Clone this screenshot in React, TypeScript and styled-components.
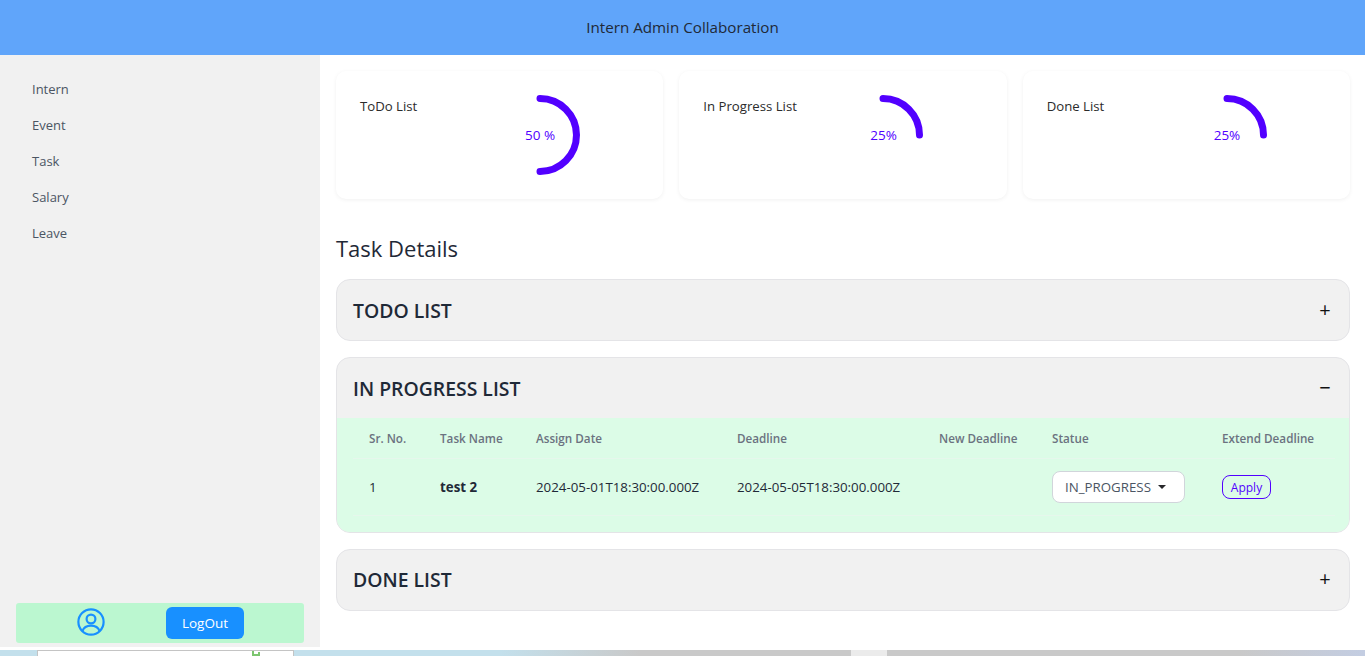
import React from "react";
import styled, { createGlobalStyle } from "styled-components";

const FONT = '"Open Sans", "Noto Sans", sans-serif';

const GlobalStyle = createGlobalStyle`
  html, body {
    margin: 0;
    padding: 0;
    background: #fff;
    font-family: ${FONT};
    color: #212529;
    overflow: hidden;
  }
  * { box-sizing: border-box; }
`;

const Page = styled.div`
  width: 1365px;
  height: 656px;
  display: flex;
  flex-direction: column;
`;

const Header = styled.header`
  height: 55px;
  flex: none;
  background: #60a5fa;
  display: flex;
  align-items: center;
  justify-content: center;
  padding-bottom: 2px;
  font-size: 15.2px;
  color: #1f2937;
`;

const Body = styled.div`
  height: 592px;
  flex: none;
  display: flex;
`;

const Sidebar = styled.aside`
  width: 320px;
  flex: none;
  background: #f1f1f1;
  display: flex;
  flex-direction: column;
  justify-content: space-between;
  padding: 16px 16px 4px;
`;

const Nav = styled.nav`
  display: flex;
  flex-direction: column;
`;

const NavItem = styled.a`
  height: 36px;
  padding-left: 16px;
  display: flex;
  align-items: center;
  font-size: 13px;
  color: #4b5563;
`;

const UserBar = styled.div`
  height: 40px;
  background: #bbf7d0;
  border-radius: 3px;
  display: grid;
  grid-template-columns: 150px 1fr;
  align-items: center;
`;

const UserIcon = styled.svg`
  width: 28px;
  height: 28px;
  justify-self: center;
  margin-bottom: 2px;
`;

const LogoutButton = styled.button`
  width: 78px;
  height: 32px;
  border: 0;
  border-radius: 6px;
  background: #1890ff;
  color: #fff;
  font-family: ${FONT};
  font-size: 13.5px;
  font-weight: 500;
`;

const Main = styled.main`
  flex: 1;
  padding: 16px 15px 0 16px;
  min-width: 0;
`;

const Stats = styled.section`
  display: grid;
  grid-template-columns: repeat(3, 1fr);
  gap: 16px;
`;

const StatCard = styled.div`
  height: 128px;
  border-radius: 10px;
  background: #fff;
  box-shadow: 0 1px 4px rgba(0, 0, 0, 0.06);
  padding: 26px 24px;
  position: relative;
`;

const StatTitle = styled.div`
  font-size: 13.2px;
  color: #2b2b2b;
  line-height: 18px;
`;

const Gauge = styled.div`
  position: absolute;
  top: 24px;
  left: 164px;
  width: 80px;
  height: 80px;
`;

const GaugeLabel = styled.span<{ $x: number }>`
  position: absolute;
  top: 31px;
  left: ${(p) => p.$x}px;
  font-size: 13.5px;
  line-height: 18px;
  color: #5200ff;
  white-space: nowrap;
`;

const SectionTitle = styled.h2`
  margin: 32px 0 14px;
  font-size: 22px;
  font-weight: 400;
  line-height: 34px;
  color: #1f2937;
`;

const AccordionList = styled.div`
  display: flex;
  flex-direction: column;
  gap: 16px;
`;

const AccordionItem = styled.div`
  border: 1px solid #e4e4e7;
  border-radius: 14px;
  overflow: hidden;
  background: #f1f1f1;
`;

const AccordionHead = styled.div`
  height: 60px;
  padding: 0 16px;
  display: flex;
  align-items: center;
  justify-content: space-between;
  font-size: 19.4px;
  font-weight: 600;
  color: #1f2937;
`;

const AccordionSign = styled.span`
  font-size: 20px;
  font-weight: 400;
  width: 16px;
  text-align: center;
  color: #111;
  margin-bottom: 2px;
`;

const AccordionBody = styled.div`
  background: #dcfce7;
  padding: 0 16px 16px;
`;

const Table = styled.table`
  width: 100%;
  border-collapse: collapse;
  table-layout: fixed;
  font-size: 13.3px;
`;

const HeadCell = styled.th<{ $w: number }>`
  width: ${(p) => p.$w}px;
  height: 40px;
  padding: 0 16px;
  text-align: left;
  font-size: 11.7px;
  font-weight: 600;
  color: #6b7280;
  border-bottom: 1px solid #e6f7ec;
  white-space: nowrap;
`;

const Cell = styled.td<{ $bold?: boolean }>`
  height: 57px;
  padding: 0 16px;
  font-weight: ${(p) => (p.$bold ? 700 : 400)};
  border-bottom: 1px solid #e6f7ec;
  white-space: nowrap;
  color: #1f2937;
`;

const StatusSelect = styled.div`
  width: 133px;
  height: 32px;
  border: 1px solid #d1d5db;
  border-radius: 8px;
  background: #fff;
  display: flex;
  align-items: center;
  gap: 7px;
  padding: 1px 0 0 12px;
  color: #4b5563;
`;

const Caret = styled.span`
  width: 0;
  height: 0;
  border-left: 4px solid transparent;
  border-right: 4px solid transparent;
  border-top: 4px solid #27272a;
`;

const ApplyButton = styled.button`
  width: 49px;
  height: 24px;
  padding: 1px 0 0;
  border: 1px solid #5200ff;
  border-radius: 8px;
  background: transparent;
  color: #5200ff;
  font-family: ${FONT};
  font-size: 12px;
`;

const Taskbar = styled.div`
  height: 6px;
  margin-top: 3px;
  flex: none;
  display: flex;
  background: linear-gradient(90deg, #c3e0ec 0 500px, #c9c9c9 640px 1240px, #c3cde2 1365px);
`;

const TaskbarWindow = styled.div`
  width: 257px;
  margin-left: 37px;
  background: #fff;
  border: 1px solid #c4c4c4;
  border-bottom: 0;
  position: relative;
`;

const TaskbarGlyph = styled.svg`
  position: absolute;
  left: 214px;
  top: 0;
  width: 8px;
  height: 5px;
`;

const TaskbarGap = styled.div`
  width: 36px;
  margin-left: 557px;
  background: #ebebeb;
`;

function Arc({ d }: { d: string }) {
  return (
    <svg width="80" height="80" viewBox="0 0 80 80">
      <path d={d} fill="none" stroke="#5200ff" strokeWidth="7" strokeLinecap="round" />
    </svg>
  );
}

const HALF = "M40 3.5 A36.5 36.5 0 0 1 40 76.5";
const QUARTER = "M40 3.5 A36.5 36.5 0 0 1 76.5 40";

const stats = [
  { title: "ToDo List", label: "50 %", arc: HALF, labelX: 25 },
  { title: "In Progress List", label: "25%", arc: QUARTER, labelX: 27 },
  { title: "Done List", label: "25%", arc: QUARTER, labelX: 27 },
];

const columns = [
  ["Sr. No.", 71],
  ["Task Name", 96],
  ["Assign Date", 201],
  ["Deadline", 202],
  ["New Deadline", 113],
  ["Statue", 170],
  ["Extend Deadline", 129],
] as const;

export default function App() {
  return (
    <Page>
      <GlobalStyle />
      <Header>Intern Admin Collaboration</Header>
      <Body>
        <Sidebar>
          <Nav>
            {["Intern", "Event", "Task", "Salary", "Leave"].map((item) => (
              <NavItem key={item}>{item}</NavItem>
            ))}
          </Nav>
          <UserBar>
            <UserIcon viewBox="0 0 28 28" fill="none" stroke="#1890ff" strokeWidth="2.2">
              <circle cx="14" cy="14" r="12.6" />
              <circle cx="14" cy="11" r="4.4" />
              <path d="M5.5 23 C7 18.5 10.5 17.6 14 17.6 C17.5 17.6 21 18.5 22.5 23" />
            </UserIcon>
            <LogoutButton>LogOut</LogoutButton>
          </UserBar>
        </Sidebar>
        <Main>
          <Stats>
            {stats.map((s) => (
              <StatCard key={s.title}>
                <StatTitle>{s.title}</StatTitle>
                <Gauge>
                  <Arc d={s.arc} />
                  <GaugeLabel $x={s.labelX}>{s.label}</GaugeLabel>
                </Gauge>
              </StatCard>
            ))}
          </Stats>
          <SectionTitle>Task Details</SectionTitle>
          <AccordionList>
            <AccordionItem>
              <AccordionHead>
                TODO LIST
                <AccordionSign>+</AccordionSign>
              </AccordionHead>
            </AccordionItem>
            <AccordionItem>
              <AccordionHead>
                IN PROGRESS LIST
                <AccordionSign>−</AccordionSign>
              </AccordionHead>
              <AccordionBody>
                <Table>
                  <thead>
                    <tr>
                      {columns.map(([name, w]) => (
                        <HeadCell key={name} $w={w}>{name}</HeadCell>
                      ))}
                    </tr>
                  </thead>
                  <tbody>
                    <tr>
                      <Cell>1</Cell>
                      <Cell $bold>test 2</Cell>
                      <Cell>2024-05-01T18:30:00.000Z</Cell>
                      <Cell>2024-05-05T18:30:00.000Z</Cell>
                      <Cell />
                      <Cell>
                        <StatusSelect>IN_PROGRESS <Caret /></StatusSelect>
                      </Cell>
                      <Cell>
                        <ApplyButton>Apply</ApplyButton>
                      </Cell>
                    </tr>
                  </tbody>
                </Table>
              </AccordionBody>
            </AccordionItem>
            <AccordionItem>
              <AccordionHead>
                DONE LIST
                <AccordionSign>+</AccordionSign>
              </AccordionHead>
            </AccordionItem>
          </AccordionList>
        </Main>
      </Body>
      <Taskbar>
        <TaskbarWindow>
          <TaskbarGlyph viewBox="0 0 8 5" fill="#7cc56f">
            <rect x="0" y="0" width="2" height="5" />
            <rect x="2" y="3" width="6" height="2" />
            <rect x="6" y="1" width="2" height="2" />
          </TaskbarGlyph>
        </TaskbarWindow>
        <TaskbarGap />
      </Taskbar>
    </Page>
  );
}
